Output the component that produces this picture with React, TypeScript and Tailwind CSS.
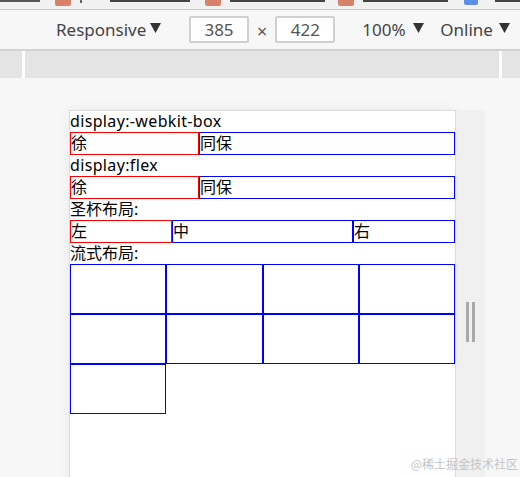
const Bookmarks = () => {
  return (
    <div className="flex h-[9px] items-start overflow-hidden bg-[#f1f1f1]">
      <div className="h-[2px] w-[40px] bg-[#555]" />
      <div className="ml-[15px] h-[6px] w-[16px] rounded-b-[2px] bg-[#d9826a]" />
      <div className="ml-[9px] h-[3px] w-[2px] bg-[#666]" />
      <div className="ml-[28px] h-[2px] w-[80px] bg-[#444]" />
      <div className="ml-[15px] h-[6px] w-[16px] rounded-b-[2px] bg-[#d9826a]" />
      <div className="ml-[9px] h-[2px] w-[95px] bg-[#444]" />
      <div className="ml-[13px] h-[6px] w-[16px] rounded-b-[2px] bg-[#d9826a]" />
      <div className="ml-[9px] h-[2px] w-[85px] bg-[#444]" />
      <div className="ml-[16px] h-[5px] w-[14px] rounded-b-[2px] bg-[#5b8ee6]" />
      <div className="ml-[17px] h-[2px] w-[25px] bg-[#444]" />
    </div>
  );
};

const Caret = ({ className }: { className: string }) => (
  <svg className={className} width="11" height="10" viewBox="0 0 11 10">
    <path d="M0 0 H11 L5.5 10 Z" fill="#333" />
  </svg>
);

const SizeBox = ({ value }: { value: string }) => (
  <div className="flex h-[27px] w-[60px] items-center justify-center rounded-[2px] border-2 border-[#d0d0d0] bg-white text-[17px] text-[#555]">
    {value}
  </div>
);

const Toolbar = () => {
  return (
    <div className="flex h-[39px] items-center bg-[#f7f7f7] text-[17px] text-[#444] [font-family:'Noto_Sans',sans-serif]">
      <div className="ml-[56px] flex w-[89px] items-center">Responsive</div>
      <Caret className="ml-[5px] mb-[3px]" />
      <div className="ml-[28px] flex items-center">
        <SizeBox value="385" />
        <span className="mx-[8px] mt-[4px] text-[18px] text-[#555]">×</span>
        <SizeBox value="422" />
      </div>
      <div className="ml-[27px] w-[43px]">100%</div>
      <Caret className="ml-[8px] mb-[3px]" />
      <div className="ml-[16px] w-[51px]">Online</div>
      <Caret className="ml-[8px] mb-[3px]" />
    </div>
  );
};

const Ruler = () => (
  <div className="flex h-[27px] bg-[#e4e4e4]">
    <div className="ml-[22px] w-[3px] bg-white" />
    <div className="ml-[474px] w-[3px] bg-white" />
  </div>
);

const Device = () => {
  return (
    <div className="w-[387px] shrink-0 border border-b-0 border-[#dcdcdc] bg-white text-[16px] leading-[21px] text-black shadow-[0_0_12px_rgba(0,0,0,0.06)] [font-family:'Noto_Sans','Noto_Sans_CJK_SC',sans-serif]">
      <div className="tracking-[0.35px]">display:-webkit-box</div>
      <div className="flex">
        <div className="flex-1 border border-[#ff0000]">徐</div>
        <div className="flex-[2] border border-[#0000ff]">同保</div>
      </div>
      <div className="tracking-[0.35px]">display:flex</div>
      <div className="flex">
        <div className="flex-1 border border-[#ff0000]">徐</div>
        <div className="flex-[2] border border-[#0000ff]">同保</div>
      </div>
      <div>圣杯布局:</div>
      <div className="flex">
        <div className="w-[102px] border border-[#ff0000]">左</div>
        <div className="flex-1 border border-[#0000ff]">中</div>
        <div className="w-[102px] border border-[#0000ff]">右</div>
      </div>
      <div>流式布局:</div>
      <div className="flex flex-wrap">
        {Array.from({ length: 9 }).map((_, i) => (
          <div key={i} className="h-[50px] w-1/4 border border-[#0000ff]" />
        ))}
      </div>
      <div className="h-[80px]" />
    </div>
  );
};

export default function App() {
  return (
    <div className="relative h-[477px] w-[520px] overflow-hidden bg-[#f7f7f7]">
      <Bookmarks />
      <div className="h-px bg-[#c8c8c8]" />
      <Toolbar />
      <div className="h-[2px] bg-[#d2d2d2]" />
      <Ruler />
      <div className="flex pl-[69px] pt-[32px]">
        <Device />
        <div className="flex h-[400px] w-[29px] justify-center gap-[3px] bg-[#f0f0f0] pt-[192px]">
          <div className="h-[40px] w-[3px] bg-[#a9a9a9]" />
          <div className="h-[40px] w-[3px] bg-[#a9a9a9]" />
        </div>
      </div>
      <div className="absolute bottom-[4px] right-[2px] text-[12px] text-[#c4c4c4] [font-family:'Noto_Sans_CJK_SC',sans-serif]">
        @稀土掘金技术社区
      </div>
    </div>
  );
}
